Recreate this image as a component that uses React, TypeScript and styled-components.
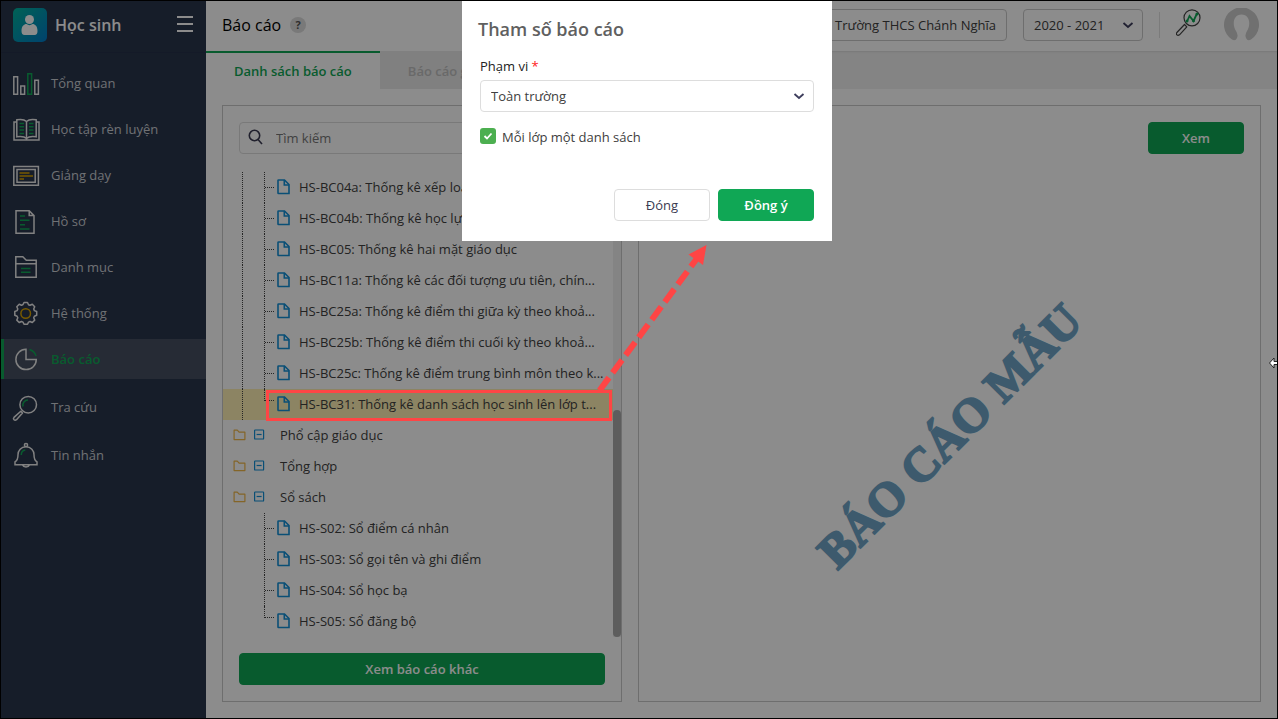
import React from 'react';
import styled, { createGlobalStyle, css } from 'styled-components';

const GlobalStyle = createGlobalStyle`
  *, *::before, *::after { box-sizing: border-box; }
  body { margin: 0; }
  body, button, input, select {
    font-family: 'Open Sans', 'Noto Sans', sans-serif;
    font-size: 13px;
    line-height: 20px;
  }
`;

const green = '#10a755';
const ink = '#404040';

const Frame = styled.div`
  position: relative;
  display: flex;
  min-height: 100vh;
  border: 1px solid #000;
  background: #fff;
  color: ${ink};
`;

const Sidebar = styled.aside`
  flex: 0 0 205px;
  background: #29354c;
`;

const Brand = styled.div`
  display: flex;
  align-items: center;
  height: 52px;
  padding: 0 12px 4px;
  gap: 8px;
  border-bottom: 1px solid #25304a;
`;

const BrandName = styled.span`
  flex: 1;
  font-size: 16px;
  font-weight: 600;
  color: #fff;
`;

const IconButton = styled.button`
  display: flex;
  padding: 0;
  border: 0;
  background: none;
  color: inherit;
`;

const Menu = styled.nav`
  display: flex;
  flex-direction: column;
  padding-top: 10px;
  gap: 6px;
`;

const MenuLink = styled.a<{ $active?: boolean }>`
  display: flex;
  align-items: center;
  height: 40px;
  padding-left: 9px;
  gap: 10px;
  border-left: 3px solid transparent;
  color: #cbced3;
  text-decoration: none;

  svg { flex: none; }

  ${(p) =>
    p.$active &&
    css`
      border-color: ${green};
      background: #454f61;
      color: ${green};
      font-weight: 600;
    `}
`;

const MenuGroup = styled.div`
  display: flex;
  flex-direction: column;
  gap: 8px;
`;

const Main = styled.main`
  display: flex;
  flex: 1;
  flex-direction: column;
  min-width: 0;
`;

const Header = styled.header`
  display: flex;
  align-items: center;
  height: 50px;
  padding: 0 18px 2px 16px;
`;

const PageTitle = styled.h1`
  margin: 0;
  font-size: 16px;
  font-weight: 500;
  color: #000;
`;

const Help = styled.button`
  width: 16px;
  height: 16px;
  margin-left: 9px;
  padding: 0;
  border: 0;
  border-radius: 50%;
  background: #dcdcdc;
  color: #555;
  font-size: 11px;
  font-weight: 700;
  line-height: 16px;
`;

const HeaderTools = styled.div`
  display: flex;
  align-items: center;
  margin-left: auto;
  gap: 16px;
`;

const SelectWrap = styled.div<{ $width?: string }>`
  display: grid;
  align-items: center;
  width: ${(p) => p.$width ?? '100%'};

  > * { grid-area: 1 / 1; }
  > svg { justify-self: end; margin-right: 9px; pointer-events: none; }
`;

const Select = styled.select`
  appearance: none;
  width: 100%;
  height: 32px;
  padding: 0 10px;
  border: 1px solid #dddddd;
  border-radius: 4px;
  background: #fff;
  color: ${ink};
`;

const SchoolInput = styled.input`
  width: 200px;
  height: 32px;
  padding: 0 10px;
  border: 1px solid #c8c8c8;
  border-radius: 4px;
  background: #fff;
  color: ${ink};
  text-align: right;
`;

const HeaderSelect = styled(Select)`
  border-color: #c8c8c8;
`;

const Divider = styled.span`
  width: 1px;
  height: 26px;
  background: #e0e0e0;
`;

const TabBar = styled.div`
  display: flex;
  height: 38px;
  background: #f0f0f0;
  box-shadow: inset 0 2px 2px -1px #dcdcdc;
`;

const Tab = styled.button<{ $active?: boolean }>`
  padding: 0 28px;
  border: 0;
  border-top: 2px solid ${(p) => (p.$active ? green : 'transparent')};
  background: ${(p) => (p.$active ? '#fff' : '#e9e9e9')};
  color: ${(p) => (p.$active ? green : '#c0c0c0')};
  font-weight: 600;
  white-space: nowrap;
`;

const Content = styled.div`
  display: flex;
  flex: 1;
  gap: 16px;
  padding: 16px;
`;

const Panel = styled.section<{ $fixed?: boolean }>`
  display: flex;
  flex-direction: column;
  flex: ${(p) => (p.$fixed ? '0 0 400px' : '1')};
  min-width: 0;
  gap: 16px;
  border: 1px solid #c8c8c8;
  padding-top: 16px;
`;

const SearchBox = styled.label`
  display: flex;
  align-items: center;
  height: 32px;
  margin: 0 16px;
  padding: 0 8px;
  gap: 12px;
  border: 1px solid #dddddd;
  border-radius: 4px;
`;

const SearchInput = styled.input`
  flex: 1;
  min-width: 0;
  padding: 0;
  border: 0;
  outline: 0;
  background: none;
  &::placeholder { color: #777; opacity: 1; }
`;

const TreeArea = styled.div`
  display: flex;
  flex: 1;
`;

const Tree = styled.ul`
  display: flex;
  flex: 1;
  flex-direction: column;
  justify-content: flex-end;
  min-width: 0;
  margin: 0;
  padding: 0;
  list-style: none;
`;

const LeafText = styled.span`
  margin: 0 0 2px 9px;
  white-space: nowrap;
`;

const Leaf = styled.li<{ $selected?: boolean }>`
  display: flex;
  align-items: center;
  height: 31px;
  background: ${(p) => (p.$selected ? '#fff0b4' : 'none')};

  svg { flex: none; margin-bottom: 2px; }
`;

const Guide = styled.span<{ $line?: boolean }>`
  flex: none;
  align-self: stretch;
  width: 22px;
  margin-left: 19px;
  border-left: 1px ${(p) => (p.$line ? 'dotted #444' : 'solid transparent')};
`;

const Elbow = styled.span<{ $last?: boolean }>`
  flex: none;
  align-self: ${(p) => (p.$last ? 'flex-start' : 'stretch')};
  width: 13px;
  height: ${(p) => (p.$last ? '12px' : 'auto')};
  border-left: 1px dotted #444;

  &::after {
    content: '';
    display: block;
    height: ${(p) => (p.$last ? '12px' : '16px')};
    width: 9px;
    border-bottom: 1px dotted #444;
  }
`;

const Branch = styled.li`
  display: flex;
  align-items: center;
  height: 31px;
  padding: 0 0 2px 10px;
  gap: 8px;

  span { margin-left: 7px; }
`;

const ScrollTrack = styled.div`
  display: flex;
  align-items: flex-end;
  width: 8px;
  background: #f1f1f1;
`;

const ScrollThumb = styled.div`
  width: 8px;
  height: 227px;
  border-radius: 4px;
  background: #aaaaaa;
`;

const Button = styled.button<{ $plain?: boolean }>`
  min-width: 96px;
  height: 32px;
  padding: 0 12px;
  border: 1px solid ${(p) => (p.$plain ? '#dddddd' : green)};
  border-radius: 4px;
  background: ${(p) => (p.$plain ? '#fff' : green)};
  color: ${(p) => (p.$plain ? '#3b3b52' : '#fff')};
  font-weight: ${(p) => (p.$plain ? 500 : 600)};
`;

const PanelFooter = styled.div`
  display: grid;
  padding: 0 16px 16px;
`;

const PanelHeader = styled.div`
  display: flex;
  justify-content: flex-end;
  padding: 0 16px;
`;

const Preview = styled.div`
  display: flex;
  flex: 1;
  align-items: center;
  justify-content: center;
`;

const Watermark = styled.span`
  transform: rotate(-45deg);
  font-family: 'Liberation Serif', serif;
  font-size: 48px;
  font-weight: 700;
  line-height: 48px;
  white-space: nowrap;
  color: #70a5c6;
  -webkit-text-stroke: 2px #70a5c6;
`;

const Backdrop = styled.div`
  position: absolute;
  inset: 0;
  display: flex;
  align-items: flex-start;
  justify-content: center;
  padding-left: 16px;
  background: rgba(0, 0, 0, 0.45);
`;

const Dialog = styled.form`
  display: flex;
  flex-direction: column;
  width: 370px;
  padding: 16px 18px 20px;
  background: #fff;
`;

const DialogTitle = styled.h2`
  margin: 0 0 15px -2px;
  font-size: 18px;
  font-weight: 600;
  line-height: 24px;
  color: #606060;
`;

const FieldLabel = styled.label`
  margin-bottom: 4px;
  color: #222;

  em { color: #ff2020; font-style: normal; }
`;

const CheckLabel = styled.label`
  display: flex;
  align-items: center;
  margin-top: 15px;
  gap: 6px;
`;

const CheckBox = styled.span`
  display: grid;
  width: 16px;
  height: 16px;
  margin-bottom: 2px;

  > * { grid-area: 1 / 1; }
  svg { pointer-events: none; }
`;

const CheckInput = styled.input`
  appearance: none;
  width: 16px;
  height: 16px;
  margin: 0;
  border-radius: 3px;
  background: #4caf50;
`;

const DialogActions = styled.div`
  display: flex;
  justify-content: flex-end;
  margin-top: 42px;
  gap: 8px;
`;

const Annotation = styled.svg`
  position: absolute;
  top: 0;
  left: 0;
  pointer-events: none;
`;

const Pointer = styled.svg`
  position: absolute;
  top: 356px;
  right: 0;
`;

const Chevron = () => (
  <svg width="12" height="12" viewBox="0 0 12 12" fill="none" stroke="#3d3d5c" strokeWidth="1.8">
    <path d="M1.5 4L6 8l4.500-4" />
  </svg>
);

const line = '#ececec';

const menuIcons: Record<string, React.ReactNode> = {
  overview: (
    <g>
      <path d="M.8 5.800h3.800v17.400H.8zM7.800 15h3.800v8.200H7.800zM21.800 9.200h3.600v14h-3.600z" />
      <path d="M14.800 2.800h3.800v20.400h-3.800z" stroke={green} />
    </g>
  ),
  study: (
    <g>
      <path d="M13.500 4.500C11.500 2.500 7 2.200 3.800 2.800v17c3.700-.5 7.700-.3 9.700 1.700 2-2 6-2.200 9.700-1.700v-17c-3.200-.6-7.700-.3-9.700 1.700zM13.500 4.500v18M3.800 5H1v18h25V5h-2.800" />
      <path d="M6.500 6.500h4.500M6.500 9.800h4.500M6.500 13.100h4.500M6.500 16.400h4.500M16 6.500h4.500M16 9.800h4.500M16 13.100h4.500M16 16.400h4.500" stroke={green} />
    </g>
  ),
  teach: (
    <g>
      <path d="M.8 3.500h24.600v18.700H.8zM4 6.500h18.200v12.700H4z" />
      <path d="M6.500 10h10M6.500 13h13.500M6.500 16h4.500" stroke="#d9a400" />
    </g>
  ),
  profile: (
    <g>
      <path d="M3 1.800h13.200l4.800 4.800v17.600H3zM16.200 1.800v4.800H21" />
      <path d="M7 7h5M7 11.300h9.500M7 15.700h5M7 20h9.500" stroke={green} />
    </g>
  ),
  catalog: (
    <g>
      <path d="M2.800 22.300V1.800h7l3.500 3.500h9.900v17zM2.800 8.700h20.400" />
      <path d="M8 13.500h9.500M8 17.300h9.500" stroke={green} />
    </g>
  ),
  system: (
    <g>
      <path d="M10 3.500l1-2h3.500l1 2.200 1.500.6 2.300-1 2.400 2.400-1 2.300.7 1.600 2.300.9v3.800l-2.300.9-.7 1.600 1 2.300-2.400 2.400-2.300-1-1.500.6-1 2.200H11l-1-2.200-1.500-.6-2.300 1-2.400-2.400 1-2.300-.7-1.600-2.300-.9v-3.800l2.300-.9.700-1.600-1-2.300 2.400-2.400 2.300 1z" strokeLinejoin="round" />
      <circle cx="12.700" cy="12.500" r="4.800" stroke="#d9a400" />
    </g>
  ),
  report: (
    <g>
      <path d="M13 2.200A10.200 10.200 0 1 0 23.300 12.500H13z" />
      <path d="M16.500 2.500a9.500 9.500 0 0 1 6.500 6.500" stroke={green} />
    </g>
  ),
  lookup: (
    <g>
      <circle cx="15.200" cy="9.700" r="8.300" />
      <path d="M7.800 16.300l1.700 1.700-6 6.700c-1.800 1.500-4-.5-2.500-2.300z" strokeLinejoin="round" />
      <path d="M10 11.500c-.8-3.500 1.500-6.500 5-6.500" stroke={green} />
    </g>
  ),
  message: (
    <g>
      <path d="M13 3.800c-5 0-8 3.700-8 8 0 4.200-.5 5.700-3 7.200v2.700h22V19c-2.500-1.500-3-3-3-7.200 0-4.300-3-8-8-8zM9.500 22c1 2.500 6 2.500 7 0" />
      <circle cx="13" cy="2" r="1.600" />
      <path d="M8.300 12c0-2.700 1.500-4.700 4-5" stroke={green} />
    </g>
  ),
};

const MenuIcon = ({ name }: { name: string }) => (
  <svg width="28" height="24" viewBox="0 0 28 24" fill="none" stroke={line} strokeWidth="1.500" overflow="visible">
    {menuIcons[name]}
  </svg>
);

const FileIcon = () => (
  <svg width="13" height="16" viewBox="0 0 13 16" fill="none" stroke="#1390d8" strokeWidth="1.600">
    <path d="M1.500 1h6L12 5.500V14.500H1.500Q1 14.500 1 14V1.500Q1 1 1.500 1z" />
    <path d="M7.300 1v5h4.700" />
  </svg>
);

const FolderIcon = () => (
  <svg width="13" height="12" viewBox="0 0 13 12" fill="none" stroke="#f0b84a" strokeWidth="1.200">
    <path d="M1.100 1.200h3.200l1.800 2h5.800v7.400H1.100z" strokeLinejoin="round" />
  </svg>
);

const CollapseIcon = () => (
  <svg width="11" height="11" viewBox="0 0 11 11" fill="none" stroke="#1390d8" strokeWidth="1.200">
    <rect x="0.600" y="1" width="9" height="9" rx="0.600" />
    <path d="M2.600 5.500h5" />
  </svg>
);

const mainMenu = [
  ['overview', 'Tổng quan'],
  ['study', 'Học tập rèn luyện'],
  ['teach', 'Giảng dạy'],
  ['profile', 'Hồ sơ'],
  ['catalog', 'Danh mục'],
  ['system', 'Hệ thống'],
];

const toolMenu = [
  ['report', 'Báo cáo'],
  ['lookup', 'Tra cứu'],
  ['message', 'Tin nhắn'],
];

const statistics = [
  'HS-BC04a: Thống kê xếp loại',
  'HS-BC04b: Thống kê học lực',
  'HS-BC05: Thống kê hai mặt giáo dục',
  'HS-BC11a: Thống kê các đối tượng ưu tiên, chín...',
  'HS-BC25a: Thống kê điểm thi giữa kỳ theo khoả...',
  'HS-BC25b: Thống kê điểm thi cuối kỳ theo khoả...',
  'HS-BC25c: Thống kê điểm trung bình môn theo k...',
  'HS-BC31: Thống kê danh sách học sinh lên lớp t...',
];

const books = [
  'HS-S02: Sổ điểm cá nhân',
  'HS-S03: Sổ gọi tên và ghi điểm',
  'HS-S04: Sổ học bạ',
  'HS-S05: Sổ đăng bộ',
];

const LeafRow = ({ text, nested, last, selected }: { text: string; nested?: boolean; last?: boolean; selected?: boolean }) => (
  <Leaf $selected={selected}>
    <Guide $line={nested} />
    <Elbow $last={last} />
    <FileIcon />
    <LeafText>{text}</LeafText>
  </Leaf>
);

const BranchRow = ({ text }: { text: string }) => (
  <Branch>
    <FolderIcon />
    <CollapseIcon />
    <span>{text}</span>
  </Branch>
);

export default function App() {
  return (
    <Frame>
      <GlobalStyle />
      <Sidebar>
        <Brand>
          <svg width="34" height="34" viewBox="0 0 34 34">
            <defs>
              <linearGradient id="brand" x1="0" y1="0" x2="1" y2="1">
                <stop offset="0" stopColor="#00b39b" />
                <stop offset="1" stopColor="#0079c8" />
              </linearGradient>
            </defs>
            <rect width="34" height="34" rx="5" fill="url(#brand)" />
            <circle cx="16.500" cy="11.500" r="4.500" fill="#fff" />
            <path d="M8.500 23c0-5 2.500-7 5-7 2 1.500 4 1.500 6 0 2.500 0 5 2 5 7 0 2.500-1 4-3 4h-10c-2 0-3-1.500-3-4z" fill="#fff" />
          </svg>
          <BrandName>Học sinh</BrandName>
          <IconButton type="button" aria-label="Menu">
            <svg width="17" height="17" viewBox="0 0 17 17" stroke="#fff" strokeWidth="2">
              <path d="M0 1h16M0 8h16M0 15h16" />
            </svg>
          </IconButton>
        </Brand>
        <Menu>
          {mainMenu.map(([icon, label]) => (
            <MenuLink href="#" key={icon}>
              <MenuIcon name={icon} />
              {label}
            </MenuLink>
          ))}
          <MenuGroup>
            {toolMenu.map(([icon, label]) => (
              <MenuLink href="#" key={icon} $active={icon === 'report'}>
                <MenuIcon name={icon} />
                {label}
              </MenuLink>
            ))}
          </MenuGroup>
        </Menu>
      </Sidebar>

      <Main>
        <Header>
          <PageTitle>Báo cáo</PageTitle>
          <Help type="button">?</Help>
          <HeaderTools>
            <SchoolInput aria-label="Trường" readOnly value="Trường THCS Chánh Nghĩa" />
            <SelectWrap $width="120px">
              <HeaderSelect aria-label="Năm học">
                <option>2020 - 2021</option>
              </HeaderSelect>
              <Chevron />
            </SelectWrap>
            <Divider />
            <IconButton type="button" aria-label="Tra cứu">
              <svg width="26" height="32" viewBox="1 0 26 32" fill="none" stroke="#444" strokeWidth="1.200">
                <circle cx="17" cy="8.800" r="8" />
                <path d="M9.500 15.500l2.300 2.300-7.300 8c-2 1.500-4-.5-2.600-2.300z" strokeLinejoin="round" />
                <path d="M12 12.500l2.500-5.500 4 5 3.500-7.500" stroke={green} strokeWidth="1.800" />
                <g fill={green} stroke="none">
                  <circle cx="12" cy="12" r="1.500" />
                  <circle cx="18.500" cy="11.700" r="1.500" />
                  <circle cx="22" cy="5" r="1.500" />
                </g>
              </svg>
            </IconButton>
            <IconButton type="button" aria-label="Tài khoản">
              <svg width="41" height="34" viewBox="-6 0 41 34">
                <path d="M13 30Q11.500 33.500 8 31.500A17.500 17.500 0 1 1 27 31.500Q23.500 33.500 22 30Q20.500 27 23 23C27 17 26 6.500 17.500 6.500S8 17 12 23Q14.500 27 13 30z" fill="#cccccc" />
              </svg>
            </IconButton>
          </HeaderTools>
        </Header>
        <TabBar role="tablist">
          <Tab type="button" role="tab" aria-selected $active>Danh sách báo cáo</Tab>
          <Tab type="button" role="tab" aria-selected={false}>Báo cáo gần đây</Tab>
        </TabBar>
        <Content>
          <Panel $fixed>
            <SearchBox>
              <svg width="16" height="20" viewBox="0 0 16 20" fill="none" stroke="#3b3b52" strokeWidth="1.600">
                <circle cx="6.500" cy="7.500" r="5.200" />
                <path d="M10 11.500l4 4.500" />
              </svg>
              <SearchInput aria-label="Tìm kiếm" placeholder="Tìm kiếm" />
            </SearchBox>
            <TreeArea>
              <Tree>
                {statistics.map((text, i) => {
                  const last = i === statistics.length - 1;
                  return <LeafRow key={text} text={text} nested last={last} selected={last} />;
                })}
                <BranchRow text="Phổ cập giáo dục" />
                <BranchRow text="Tổng hợp" />
                <BranchRow text="Sổ sách" />
                {books.map((text, i) => (
                  <LeafRow key={text} text={text} last={i === books.length - 1} />
                ))}
              </Tree>
              <ScrollTrack>
                <ScrollThumb />
              </ScrollTrack>
            </TreeArea>
            <PanelFooter>
              <Button type="button">Xem báo cáo khác</Button>
            </PanelFooter>
          </Panel>
          <Panel>
            <PanelHeader>
              <Button type="button">Xem</Button>
            </PanelHeader>
            <Preview>
              <Watermark>BÁO CÁO MẪU</Watermark>
            </Preview>
          </Panel>
        </Content>
      </Main>

      <Backdrop>
        <Dialog role="dialog" aria-labelledby="dialog-title">
          <DialogTitle id="dialog-title">Tham số báo cáo</DialogTitle>
          <FieldLabel htmlFor="scope">
            Phạm vi <em>*</em>
          </FieldLabel>
          <SelectWrap>
            <Select id="scope">
              <option>Toàn trường</option>
            </Select>
            <Chevron />
          </SelectWrap>
          <CheckLabel>
            <CheckBox>
              <CheckInput type="checkbox" defaultChecked />
              <svg width="16" height="16" viewBox="0 0 16 16" fill="none" stroke="#fff" strokeWidth="1.800">
                <path d="M4.500 8l2.500 2.500 4.500-5" />
              </svg>
            </CheckBox>
            Mỗi lớp một danh sách
          </CheckLabel>
          <DialogActions>
            <Button type="button" $plain>Đóng</Button>
            <Button type="button">Đồng ý</Button>
          </DialogActions>
        </Dialog>
      </Backdrop>

      <Annotation width="720" height="430" viewBox="1 1 720 430" fill="none" stroke="#ff4545">
        <rect x="267.500" y="391.500" width="343" height="28" strokeWidth="3" />
        <path d="M599.500 390.500L698 257" strokeWidth="6" strokeDasharray="16 6" />
        <path d="M706.500 245l-3.500 20-14.500-10.500z" fill="#ff4545" stroke="none" />
      </Annotation>
      <Pointer width="8" height="12" viewBox="0 0 8 12">
        <path d="M0.500 6L5 1v3.500h4v3H5V11z" fill="#fff" stroke="#222" />
      </Pointer>
    </Frame>
  );
}
